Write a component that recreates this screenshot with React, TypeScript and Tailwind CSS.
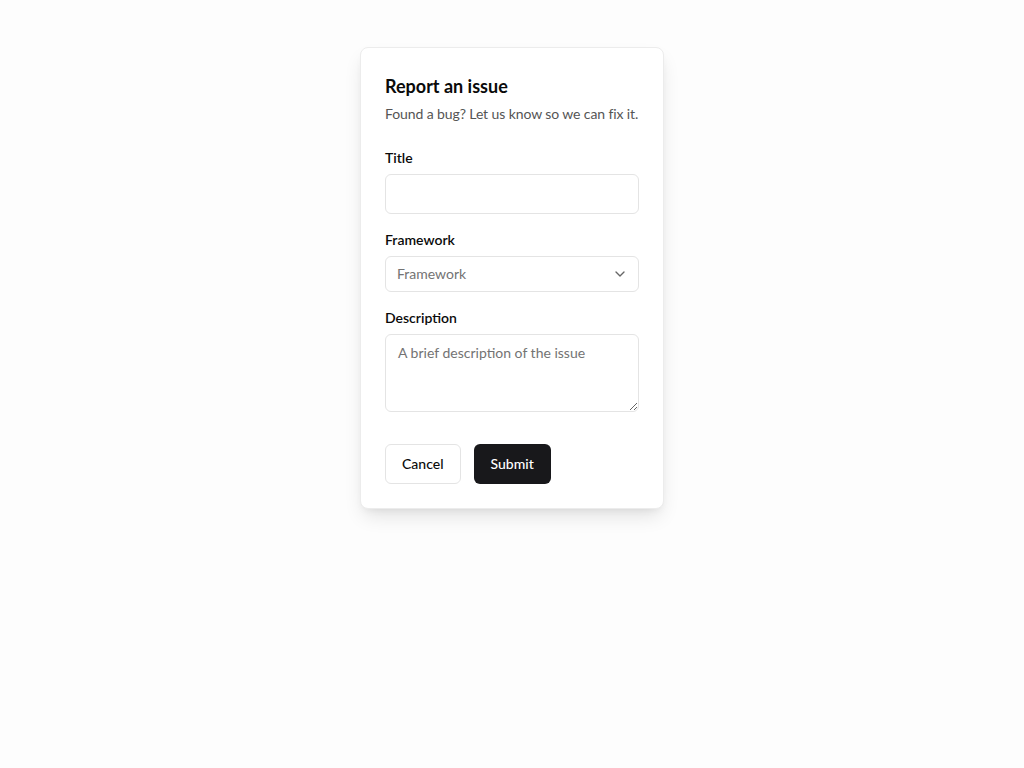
import { ChevronDown } from 'lucide-react'

export default function App() {
    return (
        <div className="min-h-screen bg-[#fdfdfd] pt-[47px] font-['Lato','Noto_Sans',sans-serif] text-[#0a0a0a]">
            <div className="mx-auto w-[304px] rounded-lg border border-[#ececec] bg-white p-6 shadow-[0_10px_20px_-4px_rgba(0,0,0,0.12),0_4px_8px_-4px_rgba(0,0,0,0.08)]">
                <h1 className="text-lg font-bold leading-7">Report an issue</h1>
                <p className="mt-1 whitespace-nowrap text-sm leading-5 tracking-[-0.1px] text-[#555]">
                    Found a bug? Let us know so we can fix it.
                </p>

                <form className="mt-6 flex flex-col gap-4" onSubmit={(e) => e.preventDefault()}>
                    <div className="flex flex-col gap-1.5">
                        <label className="text-sm font-semibold leading-5">Title</label>
                        <input className="h-10 w-full rounded-md border border-[#e4e4e4] px-3 text-sm outline-none" />
                    </div>

                    <div className="flex flex-col gap-1.5">
                        <label className="text-sm font-semibold leading-5">Framework</label>
                        <button
                            type="button"
                            className="flex h-9 w-full items-center justify-between rounded-md border border-[#e4e4e4] pl-[11px] pr-2.5 text-sm text-[#737373]"
                        >
                            <span>Framework</span>
                            <ChevronDown size={16} className="text-[#666]" />
                        </button>
                    </div>

                    <div className="flex flex-col gap-1.5">
                        <label className="text-sm font-semibold leading-5">Description</label>
                        <textarea
                            placeholder="A brief description of the issue"
                            className="h-[78px] w-full rounded-md border border-[#e4e4e4] px-3 py-2 text-sm outline-none placeholder:text-[#737373]"
                        />
                    </div>

                    <div className="mt-4 flex gap-[13px]">
                        <button type="button" className="h-10 rounded-md border border-[#e4e4e4] bg-white px-4 text-sm font-medium">
                            Cancel
                        </button>
                        <button type="submit" className="h-10 rounded-md bg-[#18181b] px-[17px] text-sm font-medium text-white">
                            Submit
                        </button>
                    </div>
                </form>
            </div>
        </div>
    )
}
